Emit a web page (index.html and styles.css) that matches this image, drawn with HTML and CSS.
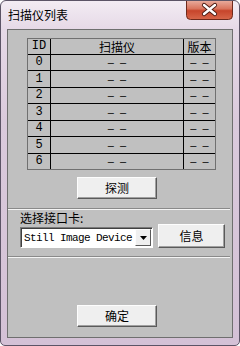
FILE: index.html
```html
<!doctype html>
<html>

<head>
  <title>扫描仪列表</title>
  <meta charset="utf-8">
  <link rel="stylesheet" href="styles.css">
</head>

<body>
  <div class="window">
    <div class="titlebar">
      <span class="title">扫描仪列表</span>
      <div class="close">
        <!-- close button glyph -->
        <svg width="47" height="20" viewBox="0 0 47 20">
          <defs>
            <linearGradient id="red" x1="0" y1="0" x2="0" y2="1">
              <stop offset="0" stop-color="#eab0a2"/>
              <stop offset="0.45" stop-color="#d9745d"/>
              <stop offset="0.55" stop-color="#c7452b"/>
              <stop offset="1" stop-color="#d7674a"/>
            </linearGradient>
          </defs>
          <path d="M0.5 0 V15.5 Q0.5 19.5 4.5 19.5 H42.5 Q46.5 19.5 46.5 15.5 V0" fill="url(#red)" stroke="#6e2a1c"/>
          <path d="M18 5 L29 14 M29 5 L18 14" stroke="#4a1a12" stroke-width="4.2" stroke-linecap="round"/>
          <path d="M18 5 L29 14 M29 5 L18 14" stroke="#ffffff" stroke-width="2.4" stroke-linecap="round"/>
        </svg>
      </div>
    </div>

    <div class="client">
      <table class="grid">
        <tr class="h16">
          <td class="c-id mono">ID</td>
          <td class="c-name">扫描仪</td>
          <td class="c-ver">版本</td>
        </tr>
        <tr class="h16"><td class="mono">0</td><td class="dash">– –</td><td class="dash">– –</td></tr>
        <tr class="h17"><td class="mono">1</td><td class="dash">– –</td><td class="dash">– –</td></tr>
        <tr class="h16"><td class="mono">2</td><td class="dash">– –</td><td class="dash">– –</td></tr>
        <tr class="h17"><td class="mono">3</td><td class="dash">– –</td><td class="dash">– –</td></tr>
        <tr class="h16"><td class="mono">4</td><td class="dash">– –</td><td class="dash">– –</td></tr>
        <tr class="h17"><td class="mono">5</td><td class="dash">– –</td><td class="dash">– –</td></tr>
        <tr class="h16 last"><td class="mono">6</td><td class="dash">– –</td><td class="dash">– –</td></tr>
      </table>

      <button class="btn btn-detect">探测</button>

      <div class="sep"></div>

      <div class="label">选择接口卡:</div>
      <div class="iface-row">
        <div class="combo">
          <span class="combo-text">Still Image Device</span>
          <span class="combo-arrow">
            <svg width="7" height="4" viewBox="0 0 7 4"><path d="M0 0 H7 L3.5 4 Z" fill="#000"/></svg>
          </span>
        </div>
        <button class="btn btn-info">信息</button>
      </div>

      <div class="sep sep-2"></div>

      <button class="btn btn-ok">确定</button>
    </div>
  </div>
</body>

</html>
```

FILE: styles.css
```css
body {
  margin: 0;
  padding: 0;
  background: #ffffff;
  font-family: "Noto Sans CJK SC", "Liberation Sans", sans-serif;
  font-size: 12px;
  color: #000;
}

.window {
  box-sizing: border-box;
  width: 240px;
  height: 346px;
  border: 1px solid #5c5466;
  border-radius: 6px 6px 5px 5px;
  background: linear-gradient(to bottom, #f3ecf3 0, #e6d9e7 28px, #dacadc 120px, #d4c1d6 100%);
  display: flex;
  flex-direction: column;
  overflow: hidden;
}

.titlebar {
  height: 28px;
  display: flex;
  align-items: flex-start;
  justify-content: space-between;
}

.title {
  margin: 7px 0 0 7px;
  font-size: 12px;
  line-height: 14px;
  color: #000;
}

.close {
  margin: -1px 6px 0 0;
  height: 20px;
  line-height: 0;
}

.client {
  box-sizing: border-box;
  width: 226px;
  height: 309px;
  margin: 0 0 0 6px;
  border: 1px solid #6f6f6f;
  background: #c0c0c0;
  display: flex;
  flex-direction: column;
  align-items: flex-start;
}

/* scanner list */
.grid {
  margin: 8px 0 0 19px;
  width: 188px;
  border-collapse: separate;
  border-spacing: 0;
  border: 1px solid #707070;
  table-layout: fixed;
}

.grid td {
  padding: 0;
  text-align: center;
  border-right: 1px solid #000;
  border-bottom: 1px solid #000;
  white-space: nowrap;
  overflow: hidden;
}

.grid td:last-child {
  border-right: none;
}

.grid tr.last td {
  border-bottom: none;
}

.grid tr.h16 td {
  height: 15px;
  line-height: 15px;
}

.grid tr.h17 td {
  height: 16px;
  line-height: 16px;
}

.grid .c-id {
  width: 22px;
}

.grid .c-name {
  width: 132px;
}

.grid .c-ver {
  width: 31px;
}

.mono {
  font-family: "Liberation Mono", "DejaVu Sans Mono", monospace;
  font-size: 12px;
}

.grid .dash {
  font-family: "Liberation Sans", sans-serif;
  font-size: 11px;
  word-spacing: 3px;
}

/* buttons */
.btn {
  box-sizing: border-box;
  padding: 0;
  font-family: "Noto Sans CJK SC", sans-serif;
  font-size: 12px;
  line-height: 14px;
  color: #000;
  background: #efefef;
  border: 1px solid;
  border-color: #fdfdfd #5a5a5a #5a5a5a #fdfdfd;
  box-shadow: inset -1px -1px 0 #a0a0a0;
}

.btn-detect {
  margin: 7px 0 0 69px;
  width: 80px;
  height: 22px;
}

.btn-ok {
  margin: 47px 0 0 69px;
  width: 80px;
  height: 22px;
}

.sep {
  margin: 9px 0 0 0;
  width: 222px;
  height: 0;
  border-top: 1px solid #8a8a8a;
  border-bottom: 1px solid #f4f4f4;
}

.label {
  margin: 2px 0 0 12px;
  line-height: 12px;
}

.iface-row {
  margin: 0 0 0 12px;
  display: flex;
  align-items: flex-end;
  gap: 5px;
}

.combo {
  box-sizing: border-box;
  width: 133px;
  height: 21px;
  background: #fff;
  border: 1px solid;
  border-color: #7a7a7a #ffffff #ffffff #7a7a7a;
  box-shadow: inset 1px 1px 0 #404040;
  display: flex;
  align-items: center;
  justify-content: space-between;
  padding: 1px 1px 1px 3px;
}

.combo-text {
  font-family: "Liberation Mono", "DejaVu Sans Mono", monospace;
  font-size: 11px;
  letter-spacing: -0.6px;
  line-height: 14px;
  white-space: nowrap;
}

.combo-arrow {
  box-sizing: border-box;
  width: 16px;
  height: 17px;
  background: #efefef;
  border: 1px solid;
  border-color: #fdfdfd #5a5a5a #5a5a5a #fdfdfd;
  display: flex;
  align-items: center;
  justify-content: center;
  line-height: 0;
}

.btn-info {
  width: 67px;
  height: 24px;
}

.sep-2 {
  margin-top: 8px;
}
```
